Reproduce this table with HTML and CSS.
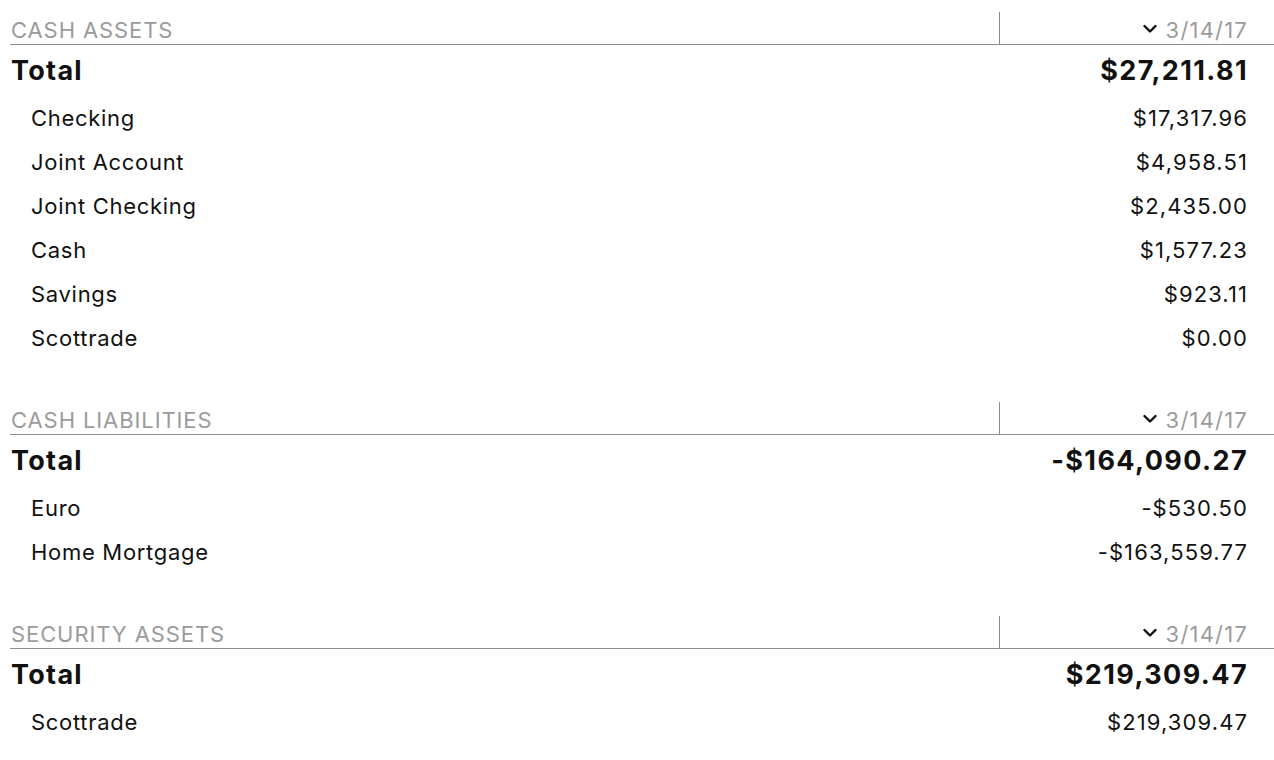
FILE: index.html
```html
<!DOCTYPE html>
<html lang="en">
<head>
    <meta charset="UTF-8">
    <meta name="viewport" content="width=device-width, initial-scale=1.0">
    <title>Net Worth</title>
    <link rel="stylesheet" href="styles.css">
</head>
<body>
    <div class="report">
        <section class="group">
            <div class="group-header">
                <div class="group-title">CASH ASSETS</div>
                <div class="group-date">
                    <svg class="chevron" width="14" height="10" viewBox="0 0 14 10"><polyline points="1.5,2 7,7.5 12.5,2" fill="none" stroke="#111" stroke-width="2.4" stroke-linecap="round" stroke-linejoin="round"/></svg>
                    <span>3/14/17</span>
                </div>
            </div>
            <div class="row total"><span>Total</span><span class="amount">$27,211.81</span></div>
            <div class="row"><span>Checking</span><span class="amount">$17,317.96</span></div>
            <div class="row"><span>Joint Account</span><span class="amount">$4,958.51</span></div>
            <div class="row"><span>Joint Checking</span><span class="amount">$2,435.00</span></div>
            <div class="row"><span>Cash</span><span class="amount">$1,577.23</span></div>
            <div class="row"><span>Savings</span><span class="amount">$923.11</span></div>
            <div class="row"><span>Scottrade</span><span class="amount">$0.00</span></div>
        </section>

        <section class="group">
            <div class="group-header">
                <div class="group-title">CASH LIABILITIES</div>
                <div class="group-date">
                    <svg class="chevron" width="14" height="10" viewBox="0 0 14 10"><polyline points="1.5,2 7,7.5 12.5,2" fill="none" stroke="#111" stroke-width="2.4" stroke-linecap="round" stroke-linejoin="round"/></svg>
                    <span>3/14/17</span>
                </div>
            </div>
            <div class="row total"><span>Total</span><span class="amount">-$164,090.27</span></div>
            <div class="row"><span>Euro</span><span class="amount">-$530.50</span></div>
            <div class="row"><span>Home Mortgage</span><span class="amount">-$163,559.77</span></div>
        </section>

        <section class="group">
            <div class="group-header">
                <div class="group-title">SECURITY ASSETS</div>
                <div class="group-date">
                    <svg class="chevron" width="14" height="10" viewBox="0 0 14 10"><polyline points="1.5,2 7,7.5 12.5,2" fill="none" stroke="#111" stroke-width="2.4" stroke-linecap="round" stroke-linejoin="round"/></svg>
                    <span>3/14/17</span>
                </div>
            </div>
            <div class="row total"><span>Total</span><span class="amount">$219,309.47</span></div>
            <div class="row"><span>Scottrade</span><span class="amount">$219,309.47</span></div>
        </section>
    </div>
</body>
</html>
```

FILE: styles.css
```css
* {
    box-sizing: border-box;
}

body {
    margin: 0;
    padding: 0;
    background: #ffffff;
    font-family: Inter, "Noto Sans", sans-serif;
    color: #111;
}

.report {
    padding: 12px 0 0 10px;
}

.group {
    margin-bottom: 41px;
}

.group-header {
    display: flex;
    height: 33px;
    border-bottom: 1px solid #8c8c8c;
}

.group-title {
    flex: 1;
    display: flex;
    align-items: flex-end;
    padding: 0 0 1px 1px;
    font-size: 22px;
    line-height: 26px;
    letter-spacing: 0.9px;
    color: #9b9b9b;
}

.group-date {
    width: 275px;
    border-left: 1px solid #8c8c8c;
    display: flex;
    align-items: flex-end;
    justify-content: flex-end;
    gap: 9px;
    padding: 0 26px 1px 0;
    font-size: 22px;
    line-height: 26px;
    letter-spacing: 1.2px;
    color: #9b9b9b;
}

.chevron {
    margin-bottom: 9px;
}

.row {
    display: flex;
    justify-content: space-between;
    align-items: center;
    height: 44px;
    padding: 0 26px 2px 21px;
    font-size: 22px;
    letter-spacing: 0.7px;
}

.row .amount {
    letter-spacing: 1.1px;
}

.row.total {
    height: 52px;
    padding-left: 1px;
    font-size: 27px;
    font-weight: 700;
    letter-spacing: 1.3px;
}

.row.total .amount {
    letter-spacing: 1.4px;
}
```
